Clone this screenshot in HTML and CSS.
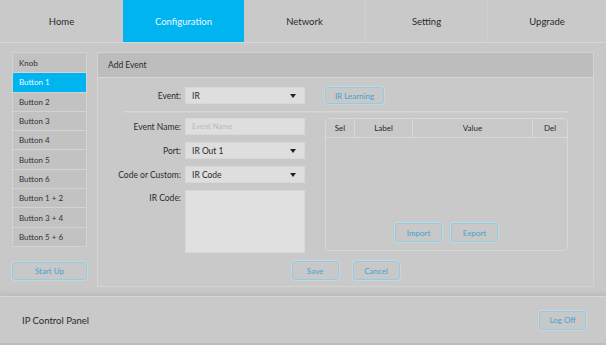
FILE: index.html
```html
<!DOCTYPE html>
<html>
<head>
<meta charset="utf-8">
<link rel="stylesheet" href="styles.css">
</head>
<body>
<div class="page">
  <nav class="nav">
    <div class="tab">Home</div>
    <div class="tab active">Configuration</div>
    <div class="tab">Network</div>
    <div class="tab">Setting</div>
    <div class="tab">Upgrade</div>
  </nav>
  <div class="content">
    <aside class="side">
      <ul class="menu">
        <li>Knob</li>
        <li class="on">Button 1</li>
        <li>Button 2</li>
        <li>Button 3</li>
        <li>Button 4</li>
        <li>Button 5</li>
        <li>Button 6</li>
        <li>Button 1 + 2</li>
        <li>Button 3 + 4</li>
        <li>Button 5 + 6</li>
      </ul>
      <button class="btn startup">Start Up</button>
    </aside>
    <section class="panel">
      <div class="panel-head">Add Event</div>
      <div class="panel-body">
        <div class="event-row">
          <label class="lbl">Event:</label>
          <div class="field select"><span>IR</span><i class="caret"></i></div>
          <button class="btn learn">IR Learning</button>
        </div>
        <div class="sep"></div>
        <div class="lower">
          <div class="form">
            <label class="lbl">Event Name:</label>
            <div class="field placeholder">Event Name</div>
            <label class="lbl">Port:</label>
            <div class="field select"><span>IR Out 1</span><i class="caret"></i></div>
            <label class="lbl">Code or Custom:</label>
            <div class="field select"><span>IR Code</span><i class="caret"></i></div>
            <label class="lbl top">IR Code:</label>
            <div class="field area"></div>
          </div>
          <div class="table">
            <div class="thead">
              <div class="c sel">Sel</div>
              <div class="c label">Label</div>
              <div class="c value">Value</div>
              <div class="c del">Del</div>
            </div>
            <div class="tbody"></div>
            <div class="tactions">
              <button class="btn sm">Import</button>
              <button class="btn sm">Export</button>
            </div>
          </div>
        </div>
        <div class="actions">
          <button class="btn sm">Save</button>
          <button class="btn sm">Cancel</button>
        </div>
      </div>
    </section>
  </div>
  <footer class="footer">
    <span class="title">IP Control Panel</span>
    <button class="btn sm logoff">Log Off</button>
  </footer>
</div>
</body>
</html>
```
FILE: styles.css
```css
* { box-sizing: border-box; }
html, body { margin: 0; padding: 0; }
body {
  width: 606px;
  height: 345px;
  overflow: hidden;
  background: #c9c9c9;
  font-family: Lato, "Open Sans", sans-serif;
  color: #2a2a2a;
}
.page { width: 606px; height: 345px; display: flex; flex-direction: column; }

.nav {
  height: 43px;
  display: grid;
  grid-template-columns: 123px 121px 121px 122px 119px;
  background: #c9c9c9;
  border-bottom: 1px solid #d6d6d6;
}
.tab {
  display: flex;
  align-items: center;
  justify-content: center;
  font-size: 9.5px;
  color: #2a2a2a;
  border-left: 1px solid #d0d0d0;
}
.tab:first-child { border-left: none; }
.tab.active { background: #00b4f0; color: #e8f8ff; border-left: none; }
.tab.active + .tab { border-left: none; }

.content {
  height: 253px;
  display: flex;
  gap: 10px;
  padding: 9px 12px 0 12px;
  background: #c8c8c8;
}
.side { width: 75px; display: flex; flex-direction: column; }
.menu {
  list-style: none;
  margin: 0;
  padding: 0;
  border: 1px solid #d3d3d3;
}
.menu li {
  height: 19.3px;
  display: flex;
  align-items: center;
  padding-left: 6px;
  font-size: 8px;
  color: #333;
  background: #c2c2c2;
  border-top: 1px solid #d3d3d3;
}
.menu li:first-child { border-top: none; }
.menu li.on { background: #00b4f0; color: #eafaff; }

.btn {
  font-family: inherit;
  height: 18px;
  padding: 0;
  background: #c8c8c8;
  border: 1px solid #93cbe3;
  border-radius: 3px;
  color: #3fa3d3;
  font-size: 8px;
  box-shadow: 0 0 0 1px rgba(200, 225, 235, 0.5);
  cursor: pointer;
}
.startup { margin-top: 15px; width: 75px; height: 18px; }

.panel {
  width: 497px;
  height: 235px;
  border: 1px solid #d4d4d4;
  border-top: none;
  display: flex;
  flex-direction: column;
  background: #c9c9c9;
}
.panel-head {
  height: 26px;
  background: #bdbdbd;
  border-top: 1px solid #d4d4d4;
  border-bottom: 1px solid #d6d6d6;
  font-size: 8.5px;
  color: #2a2a2a;
  display: flex;
  align-items: center;
  padding-left: 10px;
}
.panel-body { padding: 9px 0 0 0; display: flex; flex-direction: column; }

.lbl {
  font-size: 8.5px;
  color: #2a2a2a;
  text-align: right;
  display: flex;
  align-items: center;
  justify-content: flex-end;
}
.lbl.top { align-items: flex-start; padding-top: 3px; }

.event-row {
  display: grid;
  grid-template-columns: 83px 120px auto;
  column-gap: 4px;
  height: 17px;
}
.event-row .learn { margin-left: 16px; width: 59px; height: 17px; }

.field {
  height: 17px;
  background: #dedede;
  border: 1px solid #d8d8d8;
  font-size: 8.5px;
  color: #2a2a2a;
  display: flex;
  align-items: center;
  padding: 0 6px 0 6px;
}
.field.placeholder { color: #b9b9b9; font-size: 7.5px; }
.select { justify-content: space-between; }
.caret {
  width: 0; height: 0;
  border-left: 3.5px solid transparent;
  border-right: 3.5px solid transparent;
  border-top: 4px solid #222;
  margin-right: 2px;
}
.field.area { height: 63px; background: #e0e0e0; }

.sep {
  margin: 7px 0 0 26px;
  width: 445px;
  height: 2px;
  border-top: 1px solid #d6d6d6;
  border-bottom: 1px solid #cfcfcf;
}

.lower { display: flex; gap: 20px; margin-top: 5px; }
.form {
  display: grid;
  grid-template-columns: 83px 120px;
  grid-template-rows: 17px 17px 17px 63px;
  column-gap: 4px;
  row-gap: 7px;
}
.table {
  width: 243px;
  height: 133px;
  border: 1px solid #d8d8d8;
  border-radius: 5px;
  display: flex;
  flex-direction: column;
}
.thead {
  height: 19px;
  display: grid;
  grid-template-columns: 28px 58px 120px 1fr;
  border-bottom: 1px solid #d8d8d8;
}
.thead .c {
  font-size: 8px;
  color: #2a2a2a;
  display: flex;
  align-items: center;
  justify-content: center;
  border-left: 1px solid #d8d8d8;
}
.thead .c:first-child { border-left: none; }
.tbody { flex: 1; }
.tactions {
  display: flex;
  justify-content: center;
  gap: 9px;
  padding-bottom: 8px;
}
.btn.sm { width: 47px; height: 19px; }

.actions {
  display: flex;
  justify-content: center;
  gap: 14px;
  margin-top: 8px;
}

.footer {
  flex: 1;
  border-top: 1px solid #d5d5d5;
  box-shadow: 0 -3px 3px rgba(160,160,160,0.25);
  display: flex;
  align-items: center;
  justify-content: space-between;
  padding: 0 20px 0 22px;
  background: #c9c9c9;
  border-bottom: 2px solid #bdbdbd;
}
.title { font-size: 9.5px; color: #2a2a2a; }
.logoff { width: 48px; }
```
